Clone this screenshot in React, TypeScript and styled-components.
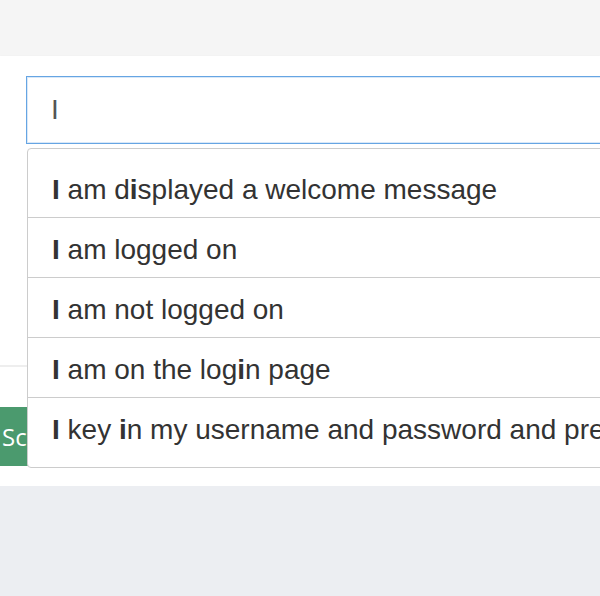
import React from "react";
import styled, {createGlobalStyle} from "styled-components";

const GlobalStyle = createGlobalStyle`
  html, body {
    margin: 0;
    padding: 0;
    overflow: hidden;
    background: #eceef2;
    font-family: "Liberation Sans", Arial, sans-serif;
  }
`;

const TopBar = styled.div`
  height: 56px;
  background: #f5f5f5;
`;

const Card = styled.div`
  position: relative;
  background: #fff;
  padding: 20px 0;
  box-shadow: 0 1px 2px rgba(0, 0, 0, 0.14);
`;

const SearchBox = styled.div`
  position: relative;
  margin-left: 26px;
  width: 760px;
`;

const Input = styled.input`
  display: block;
  box-sizing: border-box;
  width: 100%;
  height: 68px;
  padding: 0 24px;
  border: 1px solid #66a5e3;
  border-radius: 0;
  box-shadow: inset 0 0 0 1px rgba(102, 165, 227, 0.25);
  font-family: "Liberation Sans", Arial, sans-serif;
  font-size: 28px;
  color: #555;
  outline: none;
`;

const Menu = styled.ul`
  position: absolute;
  top: 72px;
  left: 1px;
  right: 0;
  margin: 0;
  padding: 9px 0;
  list-style: none;
  background: #fff;
  border: 1px solid #ccc;
  border-radius: 4px;
  z-index: 2;
`;

const Item = styled.li<{last?: boolean}>`
  box-sizing: border-box;
  height: 60px;
  display: flex;
  align-items: center;
  padding: 4px 24px 0;
  font-size: 28px;
  color: #333;
  white-space: nowrap;
  border-bottom: ${props => (props.last ? "none" : "1px solid #ccc")};
  strong {
    font-weight: bold;
  }
`;

const Spacer = styled.div`
  height: 221px;
  border-bottom: 2px solid #eee;
`;

const Actions = styled.div`
  padding-top: 40px;
`;

const RunButton = styled.button`
  display: block;
  height: 59px;
  width: 160px;
  margin: 0;
  padding: 0 0 0 2px;
  border: none;
  background: #4b9a6e;
  color: #fff;
  font-family: "Open Sans", sans-serif;
  font-size: 24px;
  text-align: left;
`;

const steps = [
  "I am displayed a welcome message",
  "I am logged on",
  "I am not logged on",
  "I am on the login page",
  "I key in my username and password and press the login button"
];

const highlight = (text: string, query: string) => {
  const parts = text.split(new RegExp(`(${query})`, "gi"));
  return parts.map((part, index) =>
    part.toLowerCase() === query.toLowerCase() ? (
      <strong key={index}>{part}</strong>
    ) : (
      <span key={index} style={{whiteSpace: "pre"}}>{part}</span>
    )
  );
};

const App = () => {
  const query = "I";
  return (
    <>
      <GlobalStyle />
      <TopBar />
      <Card>
        <SearchBox>
          <Input type="text" defaultValue={query} />
          <Menu>
            {steps.map((step, index) => (
              <Item key={index} last={index === steps.length - 1}>
                {highlight(step, query)}
              </Item>
            ))}
          </Menu>
        </SearchBox>
        <Spacer />
        <Actions>
          <RunButton>Scenario</RunButton>
        </Actions>
      </Card>
    </>
  );
};

export default App;
